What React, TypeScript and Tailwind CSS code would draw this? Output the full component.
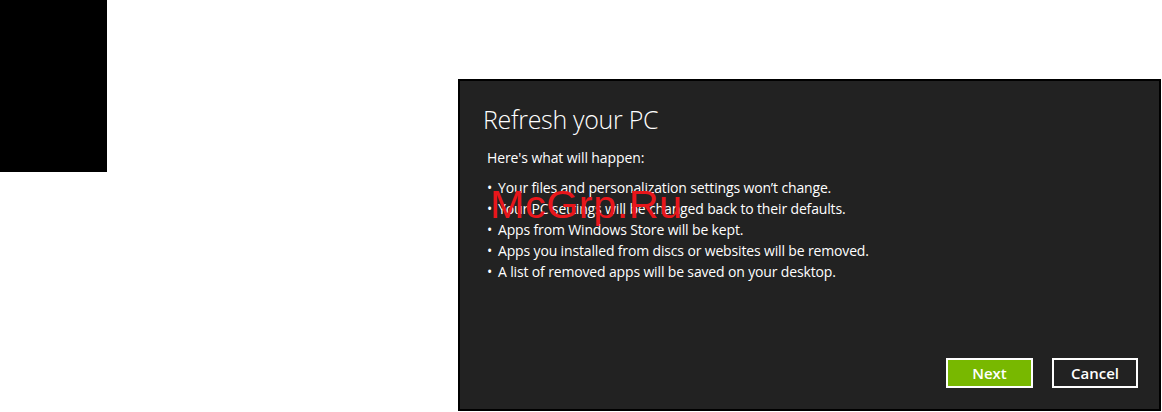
export default function App() {
  const items = [
    "Your files and personalization settings won\u2019t change.",
    "Your PC settings will be changed back to their defaults.",
    "Apps from Windows Store will be kept.",
    "Apps you installed from discs or websites will be removed.",
    "A list of removed apps will be saved on your desktop.",
  ];

  return (
    <div className="flex h-[412px] w-[1162px] items-start overflow-hidden bg-white font-['Open_Sans',sans-serif]">
      <div className="h-[172px] w-[107px] shrink-0 bg-black" />

      <div className="relative ml-[351px] mt-[79px] flex h-[332px] w-[703px] shrink-0 flex-col border-2 border-black bg-[#222222] text-white">
        <h1 className="ml-[23px] mt-[22px] text-[25px] font-light leading-[32px] tracking-[-0.3px]">
          Refresh your PC
        </h1>
        <p className="ml-[27px] mt-[13px] text-[14px] leading-[20px] tracking-[-0.1px]">
          Here&apos;s what will happen:
        </p>
        <ul className="ml-[27px] mt-[9px] text-[14px] leading-[21px] tracking-[-0.15px]">
          {items.map((t) => (
            <li key={t} className="flex">
              <span className="w-[11px] shrink-0">&bull;</span>
              <span>{t}</span>
            </li>
          ))}
        </ul>

        <div className="mt-auto mb-[21px] mr-[21px] flex justify-end gap-[19px]">
          <button className="h-[30px] w-[87px] border-2 border-white bg-[#78b800] text-[15px] font-semibold leading-none">
            Next
          </button>
          <button className="h-[30px] w-[86px] border-2 border-white bg-[#222222] text-[15px] font-semibold leading-none">
            Cancel
          </button>
        </div>

        <div className="pointer-events-none absolute left-[30px] top-[104px] origin-left scale-x-[1.06] font-['Liberation_Sans',sans-serif] text-[39px] leading-none tracking-[0.5px] text-[#e8161b]">
          McGrp.Ru
        </div>
      </div>
    </div>
  );
}
